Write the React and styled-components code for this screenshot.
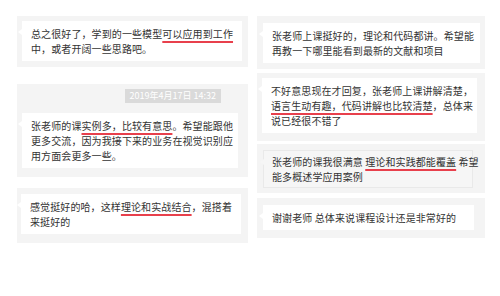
import React from "react";
import styled, { createGlobalStyle } from "styled-components";

const Global = createGlobalStyle`
  html, body { margin: 0; padding: 0; background: #fff; }
  body { font-family: "Noto Sans CJK SC", "Noto Sans", sans-serif; }
`;

const Page = styled.div`
  width: 500px;
  height: 296px;
  box-sizing: border-box;
  padding: 16px 0 0 17px;
  display: grid;
  grid-template-columns: 231px 228px;
  column-gap: 9px;
  align-items: start;
`;

const Column = styled.div`
  display: flex;
  flex-direction: column;
`;

const Panel = styled.div`
  background: #f4f4f4;
  padding: ${(p) => p.$pad};
  margin-top: ${(p) => p.$mt || 0}px;
  display: flex;
  flex-direction: column;
  align-items: flex-start;
`;

const Stamp = styled.div`
  align-self: flex-end;
  margin-right: 21px;
  height: 14px;
  line-height: 14px;
  padding: 0 5px;
  background: #dadada;
  color: #fff;
  font-size: 9px;
  font-family: "Noto Sans CJK SC", "Noto Sans", sans-serif;
  margin-bottom: 10px;
`;

const Bubble = styled.div`
  position: relative;
  box-sizing: border-box;
  width: ${(p) => p.$w}px;
  background: ${(p) => (p.$alt ? "#f6f6f6" : "#fff")};
  border: ${(p) => (p.$alt ? "1px solid #e9e9e9" : "none")};
  padding: ${(p) => (p.$alt ? "3px 8px" : "5px 9px")};
  font-size: 10px;
  letter-spacing: 0.1px;
  line-height: 15px;
  color: #333;
  white-space: nowrap;
  &::before {
    content: "";
    position: absolute;
    left: -4px;
    top: 8px;
    border-style: solid;
    border-width: 3px 4px 3px 0;
    border-color: transparent ${(p) => (p.$alt ? "#f6f6f6" : "#fff")} transparent transparent;
  }
`;

const Mark = styled.span`
  text-decoration: underline;
  text-decoration-color: #e8404c;
  text-decoration-thickness: 1.5px;
  text-underline-offset: 3px;
`;

export default function App() {
  return (
    <>
      <Global />
      <Page>
        <Column>
          <Panel $pad="5px 6px 6px 5px">
            <Bubble $w={220}>
              总之很好了，学到的一些模型<Mark>可以应用到工作</Mark>
              <br />
              中，或者开阔一些思路吧。
            </Bubble>
          </Panel>
          <Panel $pad="5px 6px 9px 5px" $mt={17}>
            <Stamp>2019年4月17日 14:32</Stamp>
            <Bubble $w={216}>
              张老师的课<Mark>实例多，比较有意思</Mark>。希望能跟他
              <br />
              更多交流，因为我接下来的业务在视觉识别应
              <br />
              用方面会更多一些。
            </Bubble>
          </Panel>
          <Panel $pad="6px 6px 9px 4px" $mt={11}>
            <Bubble $w={220}>
              感觉挺好的哈，这样<Mark>理论和实战结合</Mark>，混搭着
              <br />
              来挺好的
            </Bubble>
          </Panel>
        </Column>
        <Column>
          <Panel $pad="7px 5px 6px 6px">
            <Bubble $w={217}>
              张老师上课挺好的，理论和代码都讲。希望能
              <br />
              再教一下哪里能看到最新的文献和项目
            </Bubble>
          </Panel>
          <Panel $pad="5px 5px 8px 5px" $mt={4}>
            <Bubble $w={215}>
              不好意思现在才回复，张老师上课讲解清楚，
              <br />
              <Mark>语言生动有趣，代码讲解也比较清楚</Mark>，总体来
              <br />
              说已经很不错了
            </Bubble>
          </Panel>
          <Panel $pad="6px 5px 5px 6px" $mt={3}>
            <Bubble $w={210} $alt>
              张老师的课我很满意 <Mark>理论和实践都能覆盖</Mark> 希望
              <br />
              能多概述学应用案例
            </Bubble>
          </Panel>
          <Panel $pad="7px 5px 8px 6px" $mt={5}>
            <Bubble $w={211}>谢谢老师 总体来说课程设计还是非常好的</Bubble>
          </Panel>
        </Column>
      </Page>
    </>
  );
}
